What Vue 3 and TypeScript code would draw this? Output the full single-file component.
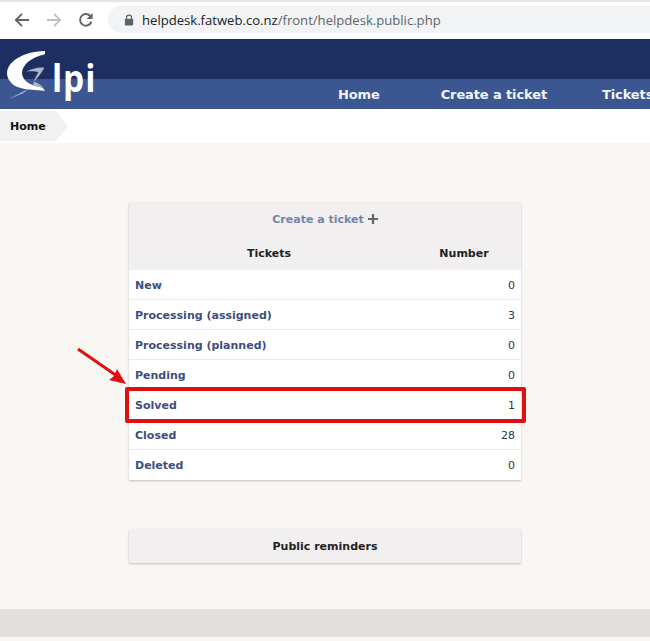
<template>
  <div class="page">
    <div class="chrome">
      <div class="tabstrip"></div>
      <div class="toolbar">
        <svg class="nav-icon" viewBox="0 0 16 16" width="16" height="16">
          <path d="M15 8H2.5M8 1.8 1.8 8 8 14.2" fill="none" stroke="#5f6368" stroke-width="1.9" />
        </svg>
        <svg class="nav-icon" viewBox="0 0 16 16" width="16" height="16">
          <path d="M1 8h12.5M8 1.8 14.2 8 8 14.2" fill="none" stroke="#bdc1c6" stroke-width="1.9" />
        </svg>
        <svg class="nav-icon" viewBox="0 0 16 16" width="16" height="16">
          <path d="M13.4 9.6A5.8 5.8 0 1 1 12.2 4" fill="none" stroke="#5f6368" stroke-width="1.9" />
          <path d="M14.6 1v6h-6z" fill="#5f6368" />
        </svg>
        <div class="address">
          <svg viewBox="0 0 12 14" width="10" height="12">
            <path d="M3 6V4a3 3 0 0 1 6 0v2" fill="none" stroke="#5f6368" stroke-width="1.5" />
            <rect x="1" y="5.5" width="10" height="8" rx="1" fill="#5f6368" />
          </svg>
          <span class="url">helpdesk.fatweb.co.nz<span class="url-path">/front/helpdesk.public.php</span></span>
        </div>
      </div>
    </div>

    <header class="header">
      <div class="header-top"></div>
      <nav class="menu">
        <a v-for="item in menu" :key="item" class="menu-item">{{ item }}</a>
      </nav>
      <div class="logo">
        <svg viewBox="0 0 300 180" width="100" height="60">
          <path
            d="M135 18C100 18 60 30 38 50 16 70 16 95 35 115 50 130 75 135 135 137L128 128 105 122C85 118 68 105 66 85 66 62 90 38 135 28Z"
            fill="#fff"
          />
          <path
            d="M78 80C95 70 120 65 133 68 125 85 110 100 102 110 110 112 122 118 130 128L100 122C98 112 110 90 115 82 105 78 90 78 78 80Z"
            fill="#aab4c8"
          />
          <path d="M25 163 90 130 68 145Z" fill="#c7cfe0" />
        </svg>
        <span class="logo-text">lpi</span>
      </div>
    </header>

    <div class="breadcrumb">
      <span class="crumb">Home</span>
    </div>

    <main class="content">
      <section class="card">
        <div class="card-create">
          <a class="create-link">Create a ticket</a>
          <svg viewBox="0 0 10 10" width="10" height="10"><path d="M5 0v10M0 5h10" stroke="#666" stroke-width="2.2" /></svg>
        </div>
        <div class="card-head">
          <span class="col-name">Tickets</span>
          <span class="col-num">Number</span>
        </div>
        <div v-for="row in rows" :key="row.label" class="row">
          <a class="row-label">{{ row.label }}</a>
          <span class="row-value">{{ row.count }}</span>
        </div>
      </section>

      <section class="card reminders">Public reminders</section>
    </main>

    <div class="footer"></div>

    <!-- annotation drawn on top of the screenshot -->
    <div class="highlight"></div>
    <svg class="arrow" viewBox="0 0 60 50" width="60" height="50">
      <path d="M1 2 40 29" stroke="#e01010" stroke-width="3" />
      <path d="M49 37 32 33l5-4 3-7z" fill="#e01010" />
    </svg>
  </div>
</template>

<script setup lang="ts">
type TicketRow = {
  label: string
  count: number
}

const menu: string[] = ['Home', 'Create a ticket', 'Tickets']

const rows: TicketRow[] = [
  { label: 'New', count: 0 },
  { label: 'Processing (assigned)', count: 3 },
  { label: 'Processing (planned)', count: 0 },
  { label: 'Pending', count: 0 },
  { label: 'Solved', count: 1 },
  { label: 'Closed', count: 28 },
  { label: 'Deleted', count: 0 }
]
</script>

<style scoped>
.page {
  position: relative;
  width: 650px;
  height: 641px;
  overflow: hidden;
  background: #f8f7f4;
  font-family: 'DejaVu Sans', Verdana, sans-serif;
  font-size: 11px;
  display: flex;
  flex-direction: column;
}

.chrome {
  height: 39px;
  background: #fff;
  flex: none;
}

.tabstrip {
  height: 2px;
  background: #e4e5e8;
}

.toolbar {
  display: flex;
  align-items: center;
  height: 35px;
  padding-left: 14px;
  box-sizing: border-box;
}

.nav-icon {
  margin-right: 16px;
  flex: none;
}

.nav-icon:nth-child(3) {
  margin-right: 14px;
}

.address {
  flex: 1;
  height: 27px;
  display: flex;
  align-items: center;
  gap: 8px;
  padding-left: 16px;
  background: #f1f3f4;
  border-radius: 14px 0 0 14px;
}

.url {
  font-family: 'Open Sans', 'Liberation Sans', sans-serif;
  font-size: 13.1px;
  color: #202124;
}

.url-path {
  color: #5f6368;
}

.header {
  position: relative;
  flex: none;
  height: 70px;
  background: #3b5690;
  display: flex;
  flex-direction: column;
}

.header-top {
  height: 40px;
  background: #1d2f62;
}

.menu {
  height: 30px;
  display: flex;
  align-items: center;
  padding-left: 338px;
  gap: 55px;
  white-space: nowrap;
}

.menu-item {
  color: #f2f5fa;
  font-weight: 700;
  font-size: 13px;
  letter-spacing: -0.12px;
}

.menu-item:first-child {
  margin-right: 6px;
}

.logo {
  position: absolute;
  left: 0;
  top: 6px;
  width: 100px;
  height: 60px;
}

.logo-text {
  position: absolute;
  left: 52px;
  top: 2px;
  color: #fff;
  font-family: 'Open Sans', sans-serif;
  font-weight: 700;
  font-size: 38px;
  line-height: 60px;
  letter-spacing: 1px;
  transform: scaleX(0.88);
  transform-origin: left;
}

.breadcrumb {
  flex: none;
  height: 34px;
  background: #fff;
  display: flex;
}

.crumb {
  display: flex;
  align-items: center;
  height: 30px;
  margin-top: 2px;
  padding: 0 22px 0 10px;
  background: #f1f1f1;
  clip-path: polygon(0 0, 56px 0, 100% 50%, 56px 100%, 0 100%);
  font-weight: 700;
  color: #111;
  box-sizing: border-box;
  width: 68px;
}

.content {
  flex: 1;
  display: flex;
  flex-direction: column;
  align-items: flex-start;
  padding: 59px 0 0 129px;
  gap: 49px;
}

.card {
  width: 392px;
  background: #fff;
  box-shadow: 0 1px 2px rgba(0, 0, 0, 0.22);
}

.card-create {
  height: 34px;
  background: #f1eff0;
  display: flex;
  align-items: center;
  justify-content: center;
  gap: 4px;
}

.create-link {
  color: #7585a8;
  font-weight: 700;
}

.card-head {
  height: 34px;
  background: #f1eff0;
  display: flex;
  align-items: center;
  font-weight: 700;
  color: #222;
}

.col-name {
  flex: 1;
  padding-left: 2px;
  text-align: center;
}

.col-num {
  width: 114px;
  text-align: center;
}

.row {
  height: 30px;
  display: flex;
  align-items: center;
  justify-content: space-between;
  padding: 1px 6px 0;
  box-sizing: border-box;
  border-bottom: 1px solid #eaeaea;
}

.row:last-child {
  border-bottom-color: transparent;
}

.row-label {
  color: #3d4e7e;
  font-weight: 700;
}

.row-value {
  color: #333;
}

.reminders {
  height: 34px;
  background: #f1eff0;
  display: flex;
  align-items: center;
  justify-content: center;
  font-weight: 700;
  color: #222;
}

.footer {
  position: absolute;
  left: 0;
  right: 0;
  top: 609px;
  height: 28px;
  background: #e1e0dc;
}

.highlight {
  position: absolute;
  left: 125px;
  top: 387px;
  width: 401px;
  height: 36px;
  border: 4px solid #e01010;
  border-radius: 2px;
  box-sizing: border-box;
}

.arrow {
  position: absolute;
  left: 77px;
  top: 347px;
}
</style>

<style>
html,
body {
  margin: 0;
  background: #f8f7f4;
}
</style>
